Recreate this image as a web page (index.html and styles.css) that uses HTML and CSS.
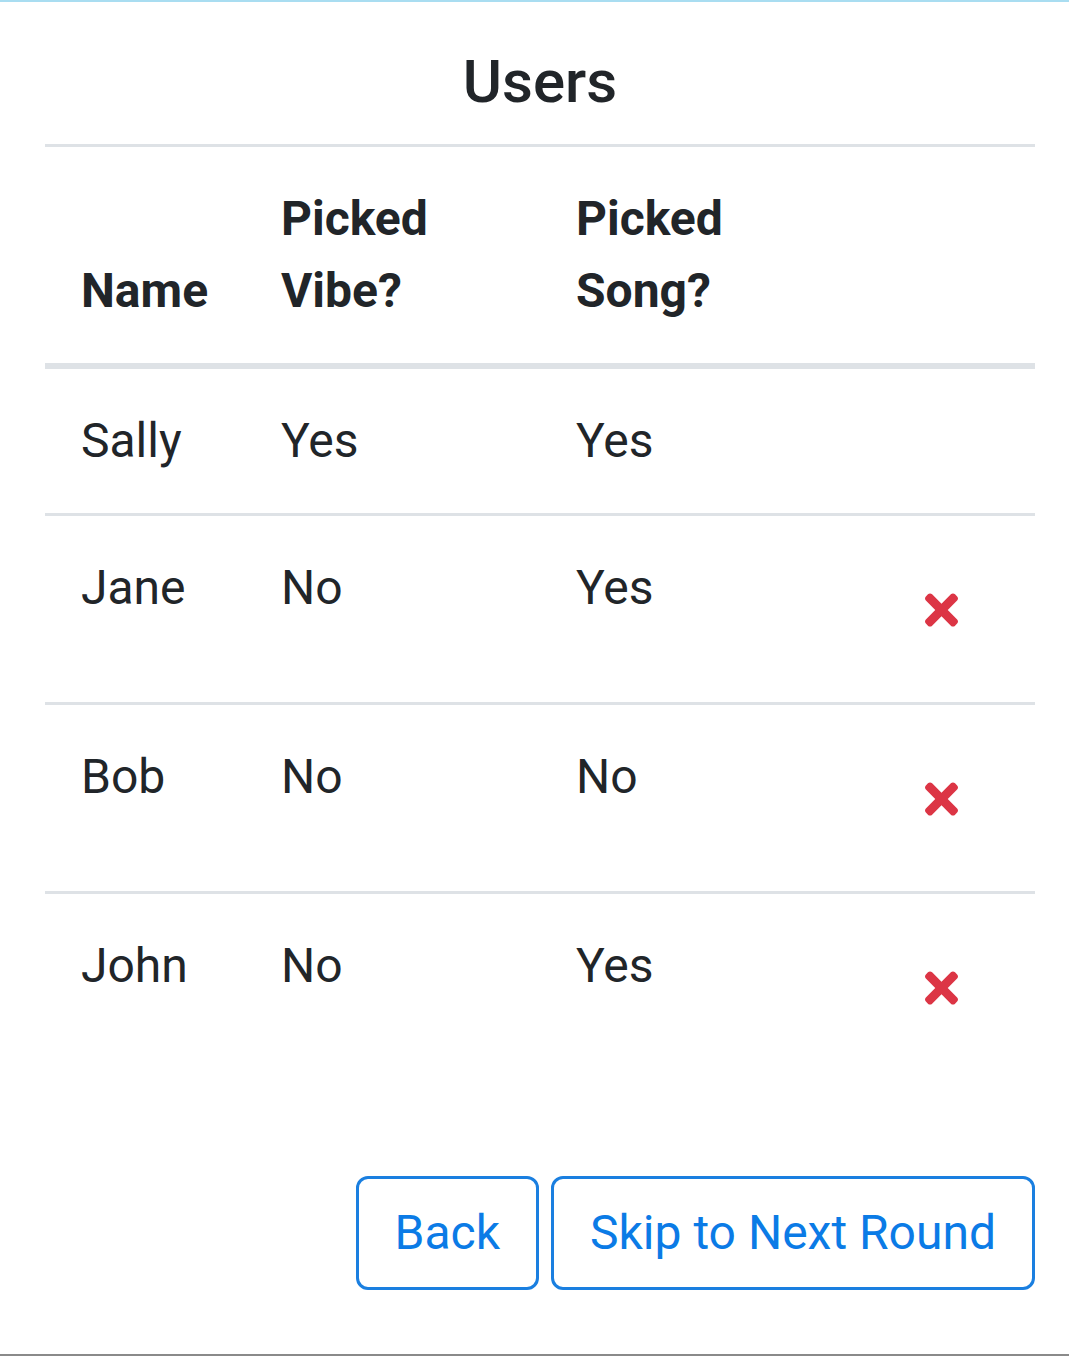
FILE: index.html
```html
<!DOCTYPE html>
<html>
<head>
<meta charset="utf-8">
<link rel="stylesheet" href="styles.css">
</head>
<body>
<div class="page">
  <div class="topline"></div>
  <div class="container">
    <h5 class="title">Users</h5>
    <table class="users">
      <colgroup>
        <col class="c-name"><col class="c-vibe"><col class="c-song"><col class="c-act">
      </colgroup>
      <thead>
        <tr>
          <th>Name</th>
          <th>Picked Vibe?</th>
          <th>Picked Song?</th>
          <th></th>
        </tr>
      </thead>
      <tbody>
        <tr><td>Sally</td><td>Yes</td><td>Yes</td><td></td></tr>
        <tr><td>Jane</td><td>No</td><td>Yes</td><td><button class="del" aria-label="Remove"><svg class="x" viewBox="0 0 352 512"><path fill="currentColor" d="M242.72 256l100.07-100.07c12.28-12.28 12.28-32.19 0-44.48l-22.24-22.24c-12.28-12.28-32.19-12.28-44.48 0L176 189.28 75.93 89.21c-12.28-12.28-32.19-12.28-44.48 0L9.21 111.45c-12.28 12.28-12.28 32.19 0 44.48L109.28 256 9.21 356.07c-12.28 12.28-12.28 32.19 0 44.48l22.24 22.24c12.28 12.28 32.2 12.28 44.48 0L176 322.72l100.07 100.07c12.28 12.28 32.2 12.28 44.48 0l22.24-22.24c12.28-12.28 12.28-32.19 0-44.48L242.72 256z"/></svg></button></td></tr>
        <tr><td>Bob</td><td>No</td><td>No</td><td><button class="del" aria-label="Remove"><svg class="x" viewBox="0 0 352 512"><path fill="currentColor" d="M242.72 256l100.07-100.07c12.28-12.28 12.28-32.19 0-44.48l-22.24-22.24c-12.28-12.28-32.19-12.28-44.48 0L176 189.28 75.93 89.21c-12.28-12.28-32.19-12.28-44.48 0L9.21 111.45c-12.28 12.28-12.28 32.19 0 44.48L109.28 256 9.21 356.07c-12.28 12.28-12.28 32.19 0 44.48l22.24 22.24c12.28 12.28 32.2 12.28 44.48 0L176 322.72l100.07 100.07c12.28 12.28 32.2 12.28 44.48 0l22.24-22.24c12.28-12.28 12.28-32.19 0-44.48L242.72 256z"/></svg></button></td></tr>
        <tr><td>John</td><td>No</td><td>Yes</td><td><button class="del" aria-label="Remove"><svg class="x" viewBox="0 0 352 512"><path fill="currentColor" d="M242.72 256l100.07-100.07c12.28-12.28 12.28-32.19 0-44.48l-22.24-22.24c-12.28-12.28-32.19-12.28-44.48 0L176 189.28 75.93 89.21c-12.28-12.28-32.19-12.28-44.48 0L9.21 111.45c-12.28 12.28-12.28 32.19 0 44.48L109.28 256 9.21 356.07c-12.28 12.28-12.28 32.19 0 44.48l22.24 22.24c12.28 12.28 32.2 12.28 44.48 0L176 322.72l100.07 100.07c12.28 12.28 32.2 12.28 44.48 0l22.24-22.24c12.28-12.28 12.28-32.19 0-44.48L242.72 256z"/></svg></button></td></tr>
      </tbody>
    </table>
    <div class="actions">
      <button class="btn-outline">Back</button>
      <button class="btn-outline">Skip to Next Round</button>
    </div>
  </div>
</div>
</body>
</html>
```
FILE: styles.css
```css
html, body {
  margin: 0;
  padding: 0;
  background: #ffffff;
}
body {
  font-family: Roboto, "Noto Sans", sans-serif;
  color: #212529;
}
.page {
  height: 1356px;
  box-sizing: border-box;
  border-bottom: 2px solid #8a8a8a;
  overflow: hidden;
}
.topline {
  height: 2px;
  background: #a9ddf1;
}
.container {
  padding: 0 34px 0 45px;
}
.title {
  margin: 44px 0 26px;
  font-size: 60px;
  line-height: 72px;
  font-weight: 500;
  text-align: center;
  color: #212529;
}
.users {
  width: 990px;
  border-collapse: collapse;
  table-layout: fixed;
  font-size: 48px;
  line-height: 72px;
}
.c-name { width: 200px; }
.c-vibe { width: 295px; }
.c-song { width: 312px; }
.c-act { width: 183px; }
.users th {
  text-align: left;
  font-weight: 700;
  vertical-align: bottom;
  padding: 36px;
  border-top: 3px solid #dee2e6;
  border-bottom: 6px solid #dee2e6;
}
.users td {
  padding: 36px;
  vertical-align: top;
  border-top: 3px solid #dee2e6;
}
.del {
  display: inline-block;
  padding: 18px 38px 18px 34px;
  border: 3px solid transparent;
  background: transparent;
  color: #dc3545;
  font-size: 48px;
  line-height: 72px;
  font-family: inherit;
}
.x {
  width: 33px;
  height: 48px;
  vertical-align: -9px;
  display: inline-block;
}
.actions {
  display: flex;
  justify-content: flex-end;
  gap: 12px;
  margin-top: 96px;
  width: 990px;
}
.btn-outline {
  font-family: Roboto, "Noto Sans", sans-serif;
  font-size: 48px;
  line-height: 72px;
  font-weight: 400;
  padding: 18px 36px;
  border: 3px solid #1a7fe0;
  border-radius: 12px;
  background: #ffffff;
  color: #0b7be6;
}
```
